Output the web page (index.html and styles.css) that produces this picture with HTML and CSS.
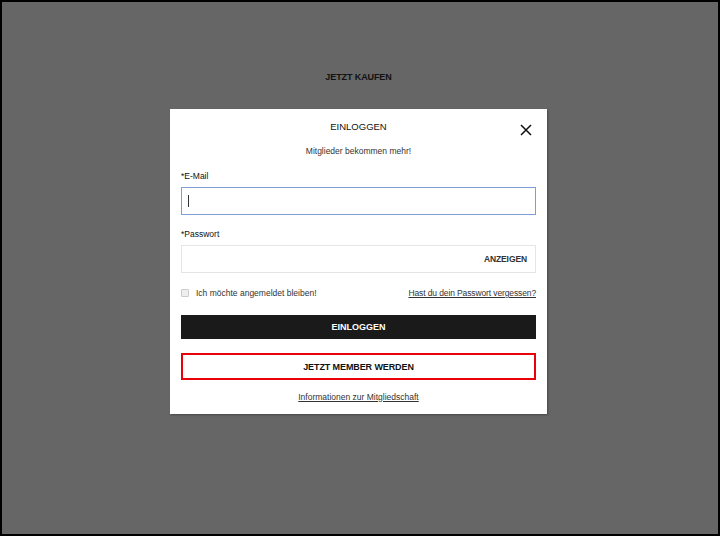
FILE: index.html
```html
<!DOCTYPE html>
<html lang="de">
<head>
    <meta charset="UTF-8">
    <meta name="viewport" content="width=device-width, initial-scale=1.0">
    <title>Einloggen</title>
    <link rel="stylesheet" href="styles.css">
</head>
<body>
    <div class="page">
        <div class="page-title">JETZT KAUFEN</div>

        <div class="modal">
            <div class="modal-title">EINLOGGEN</div>
            <a href="#" class="close" aria-label="Schließen">
                <svg width="12" height="12" viewBox="0 0 12 12">
                    <path d="M1 1 L11 11 M11 1 L1 11" stroke="#111" stroke-width="1.5" fill="none"/>
                </svg>
            </a>
            <div class="subtitle">Mitglieder bekommen mehr!</div>

            <div class="label">*E-Mail</div>
            <div class="field focused"><span class="caret"></span></div>

            <div class="label">*Passwort</div>
            <div class="field">
                <span class="show-pass">ANZEIGEN</span>
            </div>

            <div class="options">
                <label class="remember">
                    <span class="checkbox"></span>
                    Ich möchte angemeldet bleiben!
                </label>
                <a href="#" class="forgot">Hast du dein Passwort vergessen?</a>
            </div>

            <button class="btn btn-dark">EINLOGGEN</button>
            <button class="btn btn-outline">JETZT MEMBER WERDEN</button>

            <div class="info">
                <a href="#">Informationen zur Mitgliedschaft</a>
            </div>
        </div>
    </div>
</body>
</html>
```

FILE: styles.css
```css
html {
    background: #000;
}

body {
    margin: 2px;
    height: 532px;
    background: #666;
    font-family: 'Liberation Sans', Arial, sans-serif;
    color: #111;
}

.page {
    display: flex;
    flex-direction: column;
    align-items: center;
    padding-top: 69px;
}

.page-title {
    font-size: 9px;
    font-weight: bold;
    line-height: 12px;
    color: #111;
    margin-left: -3px;
    letter-spacing: -0.1px;
}

.modal {
    position: relative;
    box-sizing: border-box;
    width: 377px;
    margin-top: 26px;
    margin-left: -3px;
    padding: 11px 11px 11px;
    background: #fff;
    box-shadow: 1px 1px 2px rgba(0, 0, 0, 0.3);
}

.modal-title {
    text-align: center;
    font-size: 9.5px;
    line-height: 13px;
    color: #111;
}

.close {
    position: absolute;
    top: 15px;
    right: 15px;
    display: block;
    width: 12px;
    height: 12px;
}

.close svg {
    display: block;
}

.subtitle {
    margin-top: 12px;
    text-align: center;
    font-size: 8.5px;
    line-height: 12px;
    color: #333;
}

.label {
    margin-top: 13px;
    font-size: 8.5px;
    line-height: 12px;
}

.field {
    box-sizing: border-box;
    margin-top: 5px;
    height: 28px;
    border: 1px solid #e5e5e5;
    display: flex;
    align-items: center;
    justify-content: flex-end;
    padding: 0 8px;
}

.field.focused {
    border-color: #7d9fd6;
    justify-content: flex-start;
    padding-left: 6px;
}

.caret {
    display: block;
    width: 1px;
    height: 12px;
    background: #333;
}

.show-pass {
    font-size: 8.5px;
    font-weight: bold;
    color: #333;
    letter-spacing: -0.1px;
}

.options {
    margin-top: 14px;
    display: flex;
    justify-content: space-between;
    align-items: center;
    font-size: 8.5px;
    line-height: 12px;
    color: #333;
}

.remember {
    display: flex;
    align-items: center;
    gap: 7px;
}

.checkbox {
    box-sizing: border-box;
    width: 8px;
    height: 8px;
    border: 1px solid #ccc;
    background: #eee;
    border-radius: 1px;
}

.forgot {
    color: #333;
    text-decoration: underline;
    letter-spacing: -0.12px;
}

.btn {
    display: block;
    width: 100%;
    box-sizing: border-box;
    font-family: inherit;
    font-size: 9px;
    font-weight: bold;
    cursor: pointer;
}

.btn-dark {
    margin-top: 16px;
    height: 24px;
    border: none;
    background: #1a1a1a;
    color: #fff;
}

.btn-outline {
    margin-top: 14px;
    height: 27px;
    border: 2px solid #e8000b;
    background: #fff;
    color: #111;
    letter-spacing: -0.1px;
}

.info {
    margin-top: 11px;
    text-align: center;
    font-size: 8.5px;
    line-height: 12px;
}

.info a {
    color: #333;
    text-decoration: underline;
}
```
